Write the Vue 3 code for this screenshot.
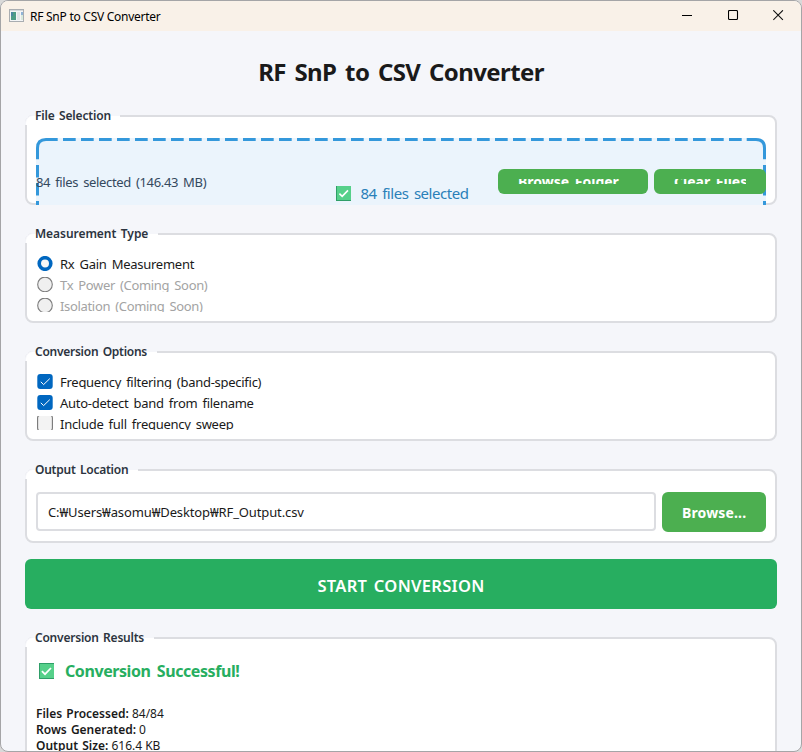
<script setup>
import { ref } from 'vue'

const measurement = ref('rx')
const types = [
  { id: 'rx', label: 'Rx Gain Measurement', enabled: true },
  { id: 'tx', label: 'Tx Power (Coming Soon)', enabled: false },
  { id: 'iso', label: 'Isolation (Coming Soon)', enabled: false }
]
const options = ref([
  { label: 'Frequency filtering (band-specific)', on: true },
  { label: 'Auto-detect band from filename', on: true },
  { label: 'Include full frequency sweep', on: false }
])
const results = [
  { name: 'Files Processed:', value: '84/84' },
  { name: 'Rows Generated:', value: '0' },
  { name: 'Output Size:', value: '616.4 KB' }
]
</script>

<template>
  <div class="desktop">
    <div class="window">
      <header class="titlebar">
        <svg class="app-icon" width="15" height="13" viewBox="0 0 15 13">
          <rect x="0.5" y="0.5" width="14" height="12" fill="#f4f5f6" stroke="#a9adb1" />
          <rect x="1" y="1" width="13" height="1" fill="#d5d9dc" />
          <rect x="2" y="3" width="5" height="8" fill="#4e9c86" />
          <rect x="2" y="3" width="2" height="4" fill="#4b86a0" />
          <rect x="8" y="3" width="3" height="8" fill="#e2e5e7" />
          <rect x="12" y="3" width="2" height="3" fill="#8fb3d6" />
          <rect x="12" y="6" width="2" height="5" fill="#d8e9dc" />
        </svg>
        <span class="caption">RF SnP to CSV Converter</span>
        <div class="controls">
          <svg width="11" height="11" viewBox="0 0 11 11"><path d="M0 5.5H10" stroke="#000" fill="none" /></svg>
          <svg width="11" height="11" viewBox="0 0 11 11"><rect x="0.5" y="0.5" width="9" height="9" rx="1" stroke="#000" stroke-width="1.1" fill="none" /></svg>
          <svg width="11" height="11" viewBox="0 0 11 11"><path d="M0.3 0.3L9.9 9.9M9.9 0.3L0.3 9.9" stroke="#111" stroke-width="1.1" fill="none" /></svg>
        </div>
      </header>

      <main class="content">
        <h1>RF SnP to CSV Converter</h1>

        <section class="group files">
          <h2 class="l-files">File Selection</h2>
          <div class="stack">
            <div class="drop">
              <svg class="dashes" width="730" height="67" viewBox="0 0 730 67" fill="none" stroke="#3498db" stroke-width="3">
                <path d="M1.5 21.2V10Q1.5 1.5 10 1.5H21.7" />
                <path d="M27 1.5H706" stroke-dasharray="12.7 5.3" />
                <path d="M710.7 1.5H720Q728.5 1.5 728.5 10V21.2" />
                <path d="M1.5 27V67M728.5 27V67" stroke-dasharray="12.4 5.6" />
              </svg>
              <svg class="tick" width="15" height="15" viewBox="0 0 15 15">
                <rect width="15" height="15" fill="#2f9e68" />
                <rect x="1" width="14" height="14" fill="#56d08a" />
                <path d="M3.4 7.6L6.2 10.4L12 4.4" fill="none" stroke="#fff" stroke-width="1.6" />
              </svg>
              <span class="drop-text">84 files selected</span>
            </div>
            <div class="file-row">
              <span class="info">84 files selected (146.43 MB)</span>
              <button class="btn short folder"><span>Browse Folder</span></button>
              <button class="btn short clear"><span>Clear Files</span></button>
            </div>
          </div>
        </section>

        <section class="group">
          <h2 class="l-type">Measurement Type</h2>
          <div class="choices">
            <label v-for="t in types" :key="t.id" class="choice" :class="{ off: !t.enabled }" @click="t.enabled && (measurement = t.id)">
              <svg width="16" height="16" viewBox="0 0 16 16">
                <circle v-if="measurement === t.id" cx="8" cy="7.5" r="5.8" fill="#f7f7f7" stroke="#0067c0" stroke-width="3.6" />
                <circle v-else cx="8" cy="7.4" r="7.3" fill="#f0f0f0" stroke="#7d7d7d" stroke-width="1.1" />
              </svg>
              <span>{{ t.label }}</span>
            </label>
          </div>
        </section>

        <section class="group">
          <h2 class="l-options">Conversion Options</h2>
          <div class="choices">
            <label v-for="o in options" :key="o.label" class="choice" @click="o.on = !o.on">
              <svg width="16" height="16" viewBox="0 0 16 16">
                <template v-if="o.on">
                  <rect x="0.3" y="0" width="15.4" height="15" rx="3" fill="#0067c0" />
                  <path d="M3.8 7.8L6.6 10.6L12.8 4.6" fill="none" stroke="#fff" stroke-width="1" />
                </template>
                <rect v-else x="0.6" y="-0.9" width="14.8" height="15.8" rx="3" fill="#f3f3f3" stroke="#777" stroke-width="1.1" />
              </svg>
              <span>{{ o.label }}</span>
            </label>
          </div>
        </section>

        <section class="group output">
          <h2 class="l-output">Output Location</h2>
          <div class="path-row">
            <div class="path">C:₩Users₩asomu₩Desktop₩RF_Output.csv</div>
            <button class="btn browse"><span>Browse...</span></button>
          </div>
        </section>

        <button class="start">START CONVERSION</button>

        <section class="group results">
          <h2 class="l-results">Conversion Results</h2>
          <div class="success">
            <svg class="tick" width="15" height="16" viewBox="0 0 15 16">
              <rect width="15" height="16" fill="#2f9e68" />
              <rect x="1" y="1" width="14" height="14" fill="#56d08a" />
              <path d="M2.9 8.2L6 11.2L12 5" fill="none" stroke="#fff" stroke-width="1.7" />
            </svg>
            <span>Conversion Successful!</span>
          </div>
          <div v-for="r in results" :key="r.name" class="result"><b>{{ r.name }}</b> {{ r.value }}</div>
        </section>
      </main>
    </div>
  </div>
</template>

<style>
body { background: #d9d9d9; overflow: hidden; }
</style>

<style scoped>
* { box-sizing: border-box; }
.desktop {
  width: 802px;
  height: 752px;
  font-family: "Noto Sans", "Noto Sans CJK KR", sans-serif;
  color: #1a1a1a;
}
.window {
  width: 802px;
  height: 752px;
  border: 1px solid #a5a5a7;
  border-radius: 8px;
  background: #f5f6fa;
  overflow: hidden;
}
.titlebar {
  height: 30px;
  display: flex;
  align-items: center;
  padding: 0 17px 0 8px;
  background: #f9f1e8;
}
.app-icon { display: block; margin-top: -2px; }
.caption {
  margin-left: 6px;
  font-size: 12px;
  letter-spacing: -0.26px;
  color: #000;
}
.controls { margin-left: auto; display: flex; gap: 34.5px; margin-top: -1px; }
.controls svg { display: block; }

.content {
  display: flex;
  flex-direction: column;
  padding: 23px 24px 0;
}
h1 {
  margin: 0;
  height: 36px;
  line-height: 36px;
  text-align: center;
  font-size: 24px;
  font-weight: 700;
  letter-spacing: -0.6px;
  word-spacing: 3px;
}
.group {
  position: relative;
  height: 90px;
  margin-bottom: 28px;
  border: 2px solid #dcdde1;
  border-radius: 8px;
  background: #fff;
  padding: 21px 9px 0;
}
.group.files { margin-top: 25px; }
.group.output { height: 74px; margin-bottom: 16px; }
.group.results { height: 180px; margin-bottom: 0; }

/* Legend plate laid over the group's border */
h2 {
  position: absolute;
  left: -2px;
  top: -2px;
  height: 10px;
  margin: 0;
  padding: 0 0 0 9px;
  border: solid #f5f6fa;
  border-width: 1px 0 0 1px;
  border-top-left-radius: 8px;
  background: #fff;
  font-size: 12px;
  font-weight: 600;
  line-height: 0;
  white-space: nowrap;
  color: #2c3440;
  word-spacing: 1.5px;
}
.l-files { letter-spacing: -0.17px; width: 95px; }
.l-type { letter-spacing: -0.05px; width: 133px; }
.l-options { letter-spacing: -0.26px; width: 132px; }
.l-output { letter-spacing: -0.24px; width: 113px; }
.l-results { letter-spacing: -0.22px; width: 129px; }

.stack { display: grid; }
.stack > * { grid-area: 1 / 1; }
.drop {
  position: relative;
  height: 67px;
  display: flex;
  justify-content: center;
  gap: 9px;
  padding: 41px 0 0 3px;
  margin-bottom: -2px;
  border-radius: 9px 9px 0 0;
  background: #ebf4fc;
}
.dashes { position: absolute; left: 0; top: 0; }
.tick { display: block; flex: none; }
.drop .tick { margin-top: 7px; }
.drop-text {
  height: 28px;
  line-height: 28px;
  font-size: 15px;
  letter-spacing: -0.45px;
  word-spacing: 2px;
  color: #2980b9;
}
.file-row {
  position: relative;
  display: flex;
  align-items: center;
  height: 25px;
  margin-top: 31px;
}
.info {
  margin-right: auto;
  font-size: 13px;
  letter-spacing: -0.35px;
  word-spacing: 2px;
  color: #34495e;
}
.btn {
  border: 0;
  border-radius: 6px;
  background: #4caf50;
  padding: 10px 20px;
  color: #fff;
  font-family: inherit;
  font-size: 14px;
  font-weight: 700;
  text-align: left;
}
.btn span { display: block; white-space: nowrap; }
.btn.short { height: 25px; }
.btn.short span {
  display: flex;
  align-items: center;
  height: 5px;
  overflow: hidden;
  word-spacing: 2px;
}
.btn.folder { width: 150px; letter-spacing: 0; }
.btn.clear { width: 112px; margin-left: 6px; }

.choices { display: flex; flex-direction: column; gap: 6px; }
.choice {
  display: flex;
  align-items: flex-start;
  gap: 7px;
  height: 15px;
  padding-left: 1px;
  overflow: hidden;
  font-size: 13px;
  letter-spacing: -0.27px;
  word-spacing: 2px;
  color: #1a1a1a;
}
.choice svg { display: block; }
.choice span { line-height: 16px; }
.choice:last-child { height: 14px; }
.choice.off { color: #a3a3a3; letter-spacing: -0.33px; }

.path-row { display: flex; gap: 6px; }
.path {
  flex: 1;
  height: 39px;
  border: 2px solid #dcdde1;
  border-radius: 4px;
  padding-left: 10px;
  font-size: 13px;
  line-height: 37px;
  letter-spacing: -0.12px;
}
.btn.browse { width: 104px; height: 40px; letter-spacing: 0.15px; line-height: 21px; }
.start {
  height: 50px;
  margin-bottom: 28px;
  border: 0;
  border-radius: 6px;
  padding: 3px 0 0;
  background: #27ae60;
  color: #fff;
  font-family: inherit;
  font-size: 16.5px;
  font-weight: 600;
  letter-spacing: 0.3px;
  word-spacing: 2px;
}
.success {
  display: flex;
  align-items: center;
  gap: 11px;
  height: 24px;
  margin: -1px 0 23px;
  padding-left: 3px;
  font-size: 16px;
  font-weight: 700;
  letter-spacing: -0.42px;
  word-spacing: 2.5px;
  color: #27ae60;
}
.result {
  height: 16px;
  line-height: 16px;
  font-size: 12px;
  white-space: pre;
}
.result b { font-weight: 600; word-spacing: 1px; }
</style>
